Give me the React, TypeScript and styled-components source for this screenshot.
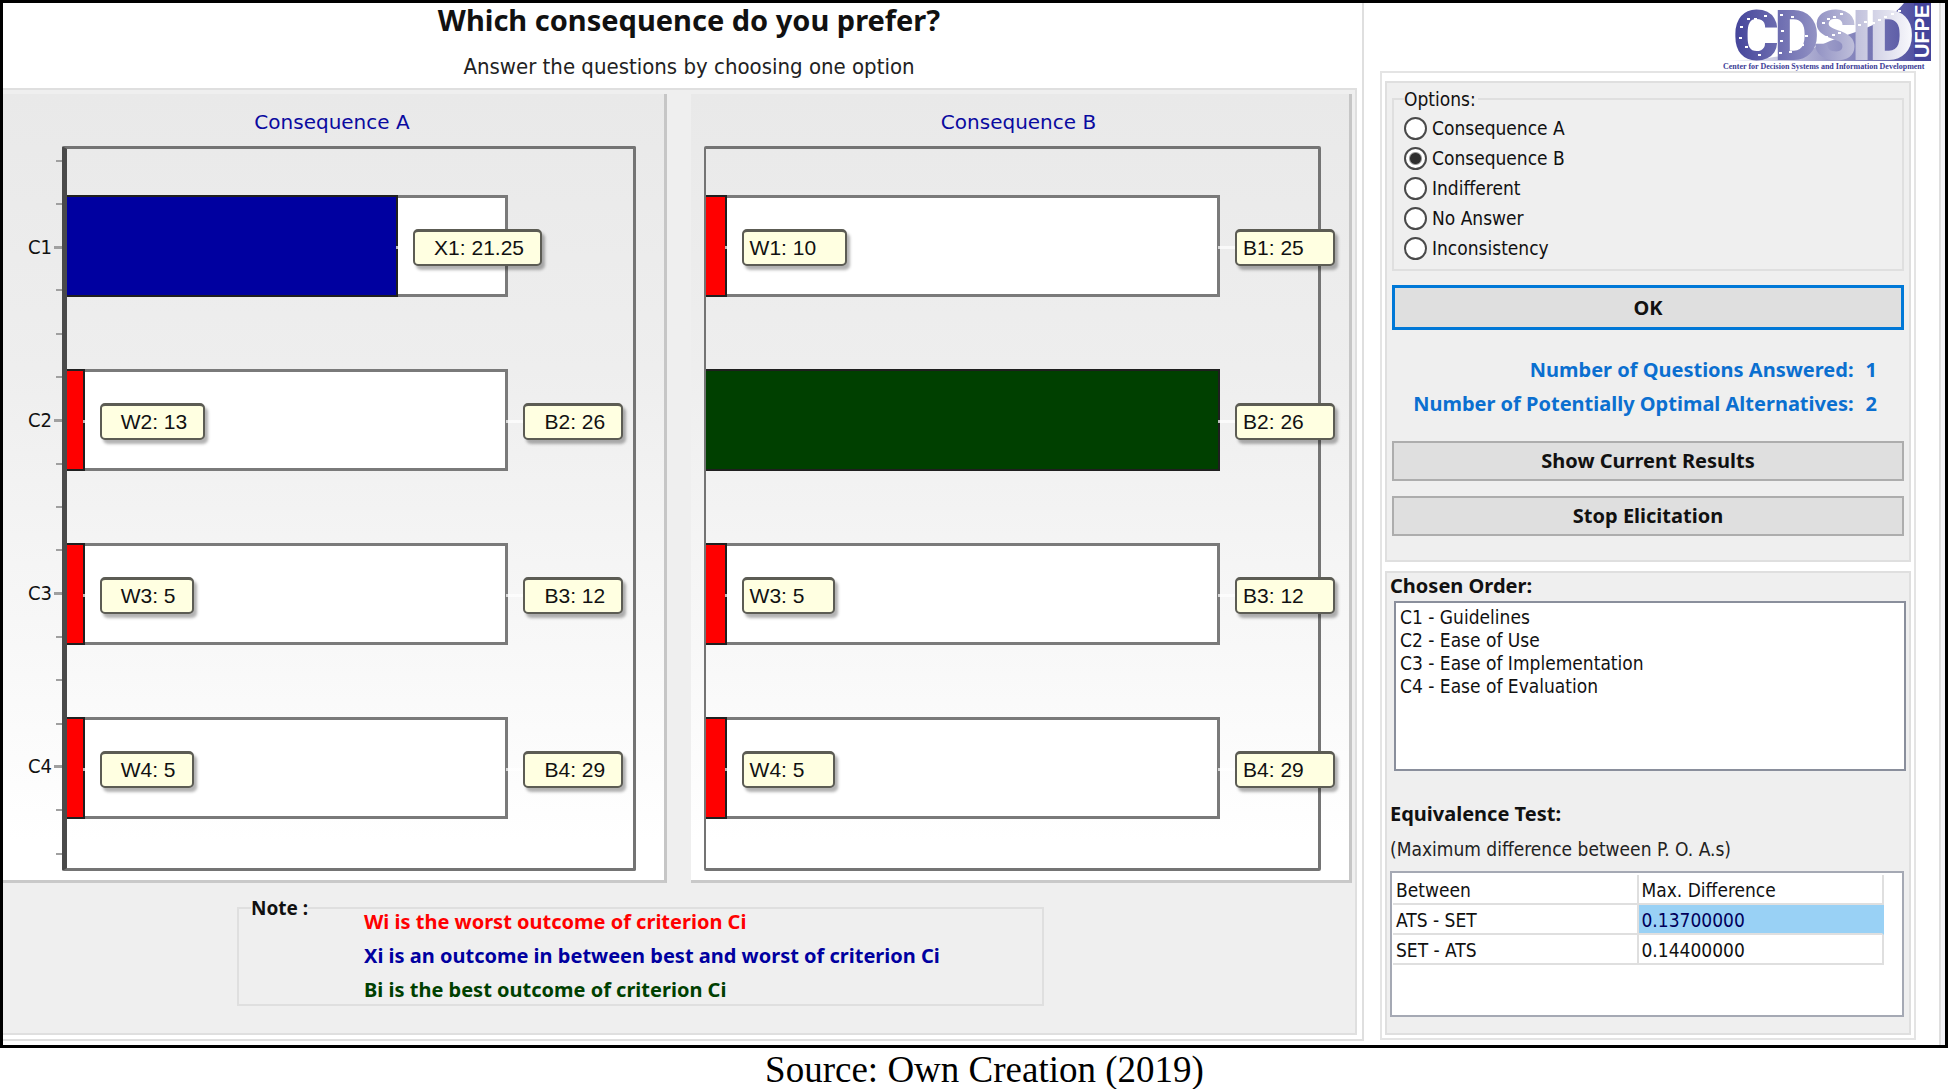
import React, { useState } from "react";
import styled, { createGlobalStyle } from "styled-components";

const ui = `"DejaVu Sans Condensed", "DejaVu Sans", Tahoma, sans-serif`;
const uiBold = `"Noto Sans", Tahoma, sans-serif`;
const line = "#dfdfdf";
const face = "#efefef";

const GlobalStyle = createGlobalStyle`
  * { box-sizing: border-box; }
  body { margin: 0; background: #fff; color: #111; font: 19px/25px ${ui}; }
  h1, h2, p, ul { margin: 0; padding: 0; }
`;

const Window = styled.div`
  display: flex;
  border: 3px solid #000;
`;

const Main = styled.main`
  flex: 1;
  min-width: 0;
  margin-bottom: 4px;
  border-right: 2px solid ${line};
  border-bottom: 2px solid ${line};
  padding: 0 5px 4px 0;
`;

const Header = styled.header`
  padding: 0 0 6px 18px;
  text-align: center;
`;

const Title = styled.h1`
  font: bold 29px/34px ${uiBold};
`;

const Subtitle = styled.p`
  margin-top: 15px;
  font-size: 22px;
  line-height: 30px;
  color: #222;
`;

const Body = styled.section`
  border: 2px solid ${line};
  border-left: 0;
  background: ${face};
  padding: 4px 3px 27px 0;
`;

const Charts = styled.div`
  display: grid;
  grid-template-columns: 664fr 661fr;
  gap: 24px;
`;

const ChartPanel = styled.section`
  display: flex;
  flex-direction: column;
  padding: 0 28px 9px 0;
  border-right: 3px solid #c6c6c6;
  border-bottom: 3px solid #c9c9c9;
  background: linear-gradient(#e9e9e9, #eeeeee 35%, #ffffff 95%);
`;

const ChartTitle = styled.h2`
  padding: 16px 0 11px 25px;
  text-align: center;
  font: 20px/25px "DejaVu Sans", Verdana, sans-serif;
  color: #0a0aa0;
`;

const ChartArea = styled.div`
  display: flex;
`;

const Axis = styled.div<{ $wide: boolean }>`
  flex: none;
  width: ${(p) => (p.$wide ? 59 : 13)}px;
  display: flex;
  flex-direction: column;
  justify-content: space-between;
  padding: 13px 0 16px;
  font-size: 20px;
`;

const Tick = styled.div`
  display: flex;
  align-items: center;
  justify-content: flex-end;
  height: 3px;
  gap: 2px;
`;

const TickMark = styled.span<{ $major: boolean }>`
  width: ${(p) => (p.$major ? 8 : 6)}px;
  height: ${(p) => (p.$major ? 3 : 2)}px;
  background: #a0a0a0;
`;

const Plot = styled.div<{ $axis: boolean }>`
  flex: 1;
  display: flex;
  flex-direction: column;
  gap: 72px;
  padding: 46px 0 49px;
  border: 3px solid #747474;
  border-left: ${(p) => (p.$axis ? "5px solid #4a4a4a" : "2px solid #747474")};
  border-radius: 2px;
`;

const Bar = styled.div`
  position: relative;
  height: 102px;
  background: #fff;
  box-shadow: inset -3px 3px #7a7a7a, inset 0 -3px #7a7a7a;
`;

const Fill = styled.div<{ $color: string }>`
  position: relative;
  height: 102px;
  background: ${(p) => p.$color};
  box-shadow: inset -2px 2px #1f1f1f, inset 0 -2px #1f1f1f;
`;

const Tag = styled.span<{ $inset: boolean }>`
  position: absolute;
  z-index: 1;
  top: 34px;
  left: calc(100% + 15px);
  padding: 0 ${(p) => (p.$inset ? "16px 0 19px" : "29px 0 6px")};
  border: 2px solid #5c5c54;
  border-top-width: 3px;
  border-radius: 5px;
  background: #ffffe1;
  box-shadow: 3px 4px 3px rgba(0, 0, 0, 0.3);
  font: 21px/32px "Liberation Sans", Arial, sans-serif;
  white-space: nowrap;

  &::before {
    content: "";
    position: absolute;
    right: calc(100% + 2px);
    top: 14px;
    width: 17px;
    height: 3px;
    background: rgba(255, 255, 255, 0.7);
  }
`;

const Note = styled.fieldset`
  min-width: 0;
  margin: 12px 308px 0 234px;
  padding: 0 12px;
  border: 2px solid ${line};
`;

const NoteLegend = styled.legend`
  padding: 0;
  font: bold 19px/26px ${uiBold};
`;

const NoteList = styled.ul`
  display: flex;
  flex-direction: column;
  gap: 6px;
  margin-top: -13px;
  padding-left: 113px;
  list-style: none;
`;

const NoteItem = styled.li<{ $color: string }>`
  font: bold 20px/28px ${uiBold};
  color: ${(p) => p.$color};
`;

const Side = styled.aside`
  flex: none;
  width: 575px;
  padding: 0 23px 4px 16px;
`;

const LogoRow = styled.div`
  display: flex;
  justify-content: flex-end;
  height: 68px;
  margin-right: -15px;
`;

const LogoArt = styled.svg`
  width: 211px;
  height: 68px;
  overflow: visible;
`;

const Gutter = styled.div`
  flex: none;
  width: 6px;
  border-left: 2px solid ${line};
  background: #f3f3f7;
`;

const SidePanel = styled.div`
  display: flex;
  flex-direction: column;
  gap: 9px;
  padding: 8px 3px 3px;
  border: 2px solid #e4e4e4;
`;

const ActionGroup = styled.section`
  display: flex;
  flex-direction: column;
  padding: 5px 5px 24px;
  border: 2px solid ${line};
  background: ${face};
`;

const ResultGroup = styled.section`
  padding: 0 3px 16px;
  border: 2px solid ${line};
  background: ${face};
`;

const Options = styled.fieldset`
  min-width: 0;
  margin: 0 0 14px;
  padding: 3px 10px 6px;
  border: 2px solid ${line};
`;

const OptionsLegend = styled.legend`
  padding: 0 2px 0 0;
  line-height: 22px;
`;

const Option = styled.label`
  display: flex;
  align-items: center;
  gap: 5px;
  line-height: 30px;
`;

const Radio = styled.input`
  appearance: none;
  width: 23px;
  height: 23px;
  margin: 0;
  border: 2px solid #4a4a4a;
  border-radius: 50%;
  background: #fff;

  &:checked {
    background: radial-gradient(circle, #2e2e2e 5px, #fff 7px);
  }
`;

const Button = styled.button<{ $primary?: boolean }>`
  padding: 0;
  border: ${(p) => (p.$primary ? "3px solid #0078d7" : "2px solid #adadad")};
  background: #dfdfdf;
  color: #111;
  font: bold 20px/${(p) => (p.$primary ? 39 : 36)}px ${uiBold};
`;

const Stats = styled.div`
  margin: 23px 27px 20px 0;
`;

const Stat = styled.p`
  display: flex;
  justify-content: flex-end;
  gap: 12px;
  font: bold 20px/34px ${uiBold};
  color: #0b6fd0;
`;

const Buttons = styled.div`
  display: flex;
  flex-direction: column;
  gap: 15px;
`;

const GroupTitle = styled.h2`
  font: bold 20px/26px ${uiBold};
`;

const OrderList = styled.ul`
  min-height: 170px;
  margin: 2px 0 30px 4px;
  padding: 3px 4px;
  border: 2px solid #8a8f9c;
  background: #fff;
  list-style: none;
  line-height: 23px;
`;

const Hint = styled.p`
  margin: 9px 0;
  line-height: 26px;
  color: #222;
`;

const Grid = styled.div`
  min-height: 146px;
  margin-right: 2px;
  padding: 2px 18px 0 1px;
  border: 2px solid #a5a9b4;
  background: #fff;
`;

const Table = styled.table`
  width: 100%;
  table-layout: fixed;
  border-collapse: separate;
  border-spacing: 0;
`;

const cell = `
  padding: 3px 0 0 3px;
  border: solid ${line};
  border-width: 0 2px 2px 0;
  font-weight: normal;
  text-align: left;
`;

const HeadCell = styled.th`
  ${cell}
`;

const Cell = styled.td<{ $selected?: boolean }>`
  ${cell}
  ${(p) => p.$selected && "background: #99d1f5; color: #00005a; border-right-color: #99d1f5;"}
`;

const Caption = styled.p`
  padding: 0 0 0 21px;
  text-align: center;
  font: 37px/43px "Liberation Serif", "Times New Roman", serif;
  color: #000;
`;

const blue = "#0000a0";
const red = "#ff0000";
const green = "#004000";

type BarData = { fill: number; color: string; inner?: string; outer?: string };

const chartA: BarData[] = [
  { fill: 75, color: blue, inner: "X1: 21.25" },
  { fill: 4, color: red, inner: "W2: 13", outer: "B2: 26" },
  { fill: 4, color: red, inner: "W3: 5", outer: "B3: 12" },
  { fill: 4, color: red, inner: "W4: 5", outer: "B4: 29" },
];

const chartB: BarData[] = [
  { fill: 4, color: red, inner: "W1: 10", outer: "B1: 25" },
  { fill: 100, color: green, outer: "B2: 26" },
  { fill: 4, color: red, inner: "W3: 5", outer: "B3: 12" },
  { fill: 4, color: red, inner: "W4: 5", outer: "B4: 29" },
];

function Chart({ title, bars, scale, axis = false }: { title: string; bars: BarData[]; scale: number; axis?: boolean }) {
  return (
    <ChartPanel>
      <ChartTitle>{title}</ChartTitle>
      <ChartArea>
        <Axis $wide={axis}>
          {axis &&
            Array.from({ length: 17 }, (_, i) => {
              const major = i % 4 === 2;
              return (
                <Tick key={i}>
                  {major && <span>C{(i + 2) / 4}</span>}
                  <TickMark $major={major} />
                </Tick>
              );
            })}
        </Axis>
        <Plot $axis={axis}>
          {bars.map((bar, i) => (
            <Bar key={i} style={{ width: `${scale}%` }}>
              <Fill $color={bar.color} style={{ width: `${bar.fill}%` }}>
                {bar.inner && <Tag $inset={axis}>{bar.inner}</Tag>}
              </Fill>
              {bar.outer && <Tag $inset={axis}>{bar.outer}</Tag>}
            </Bar>
          ))}
        </Plot>
      </ChartArea>
    </ChartPanel>
  );
}

const dots = [
  [21, 24], [20, 35], [26, 44], [39, 52], [45, 13], [35, 16], [28, 16], [61, 12], [62, 28], [61, 38], [60, 50],
  [72, 14], [80, 22], [86, 33], [82, 42], [70, 49], [103, 20], [108, 16], [114, 14], [121, 11], [106, 34],
  [113, 32], [119, 30], [126, 27], [133, 24], [139, 22], [145, 19], [153, 20], [159, 17], [165, 14], [172, 11], [179, 8],
];

function Logo() {
  return (
    <LogoArt viewBox="0 0 211 68" role="img" aria-label="CDSID UFPE">
      <defs>
        <linearGradient id="letters" gradientUnits="userSpaceOnUse" x1="14" y1="0" x2="190" y2="0">
          <stop offset="0" stopColor="#44449a" />
          <stop offset="0.4" stopColor="#8585bd" />
          <stop offset="0.7" stopColor="#c2c2dc" />
          <stop offset="1" stopColor="#f6f6fb" />
        </linearGradient>
        <linearGradient id="wedge" x1="0" y1="0" x2="1" y2="0">
          <stop offset="0" stopColor="#ffffff" />
          <stop offset="0.5" stopColor="#9c9cc8" />
          <stop offset="1" stopColor="#44449a" />
        </linearGradient>
      </defs>
      <path d="M0 58 C60 56 85 50 110 38 C145 26 170 18 184 0 H211 V58 Z" fill="url(#wedge)" />
      <text x="13 54 93 131 149" y="57" fontFamily="Roboto, sans-serif" fontWeight="900" fontSize="70" fill="url(#letters)">
        CDSID
      </text>
      {dots.map(([x, y]) => (
        <rect key={`${x}-${y}`} x={x - 1} y={y - 1} width="3" height="2" fill="#fff" />
      ))}
      <rect x="194" width="17" height="58" fill="#44449a" />
      <text x="-55" y="209" transform="rotate(-90)" fontFamily="Liberation Sans, sans-serif" fontWeight="bold" fontSize="20" fill="#fff">UFPE</text>
      <text x="3" y="66" fontFamily="Liberation Serif, serif" fontWeight="bold" fontSize="8" fill="#3c3c96">Center for Decision Systems and Information Development</text>
    </LogoArt>
  );
}

const options = ["Consequence A", "Consequence B", "Indifferent", "No Answer", "Inconsistency"];
const order = ["C1 - Guidelines", "C2 - Ease of Use", "C3 - Ease of Implementation", "C4 - Ease of Evaluation"];

export default function App() {
  const [choice, setChoice] = useState("Consequence B");
  return (
    <>
      <GlobalStyle />
      <Window>
        <Main>
          <Header>
            <Title>Which consequence do you prefer?</Title>
            <Subtitle>Answer the questions by choosing one option</Subtitle>
          </Header>
          <Body>
            <Charts>
              <Chart title="Consequence A" bars={chartA} scale={78} axis />
              <Chart title="Consequence B" bars={chartB} scale={84} />
            </Charts>
            <Note>
              <NoteLegend>Note :</NoteLegend>
              <NoteList>
                <NoteItem $color={red}>Wi is the worst outcome of criterion Ci</NoteItem>
                <NoteItem $color={blue}>Xi is an outcome in between best and worst of criterion Ci</NoteItem>
                <NoteItem $color={green}>Bi is the best outcome of criterion Ci</NoteItem>
              </NoteList>
            </Note>
          </Body>
        </Main>
        <Side>
          <LogoRow>
            <Logo />
          </LogoRow>
          <SidePanel>
            <ActionGroup>
              <Options>
                <OptionsLegend>Options:</OptionsLegend>
                {options.map((name) => (
                  <Option key={name}>
                    <Radio type="radio" name="option" checked={choice === name} onChange={() => setChoice(name)} />
                    {name}
                  </Option>
                ))}
              </Options>
              <Button type="button" $primary>OK</Button>
              <Stats>
                <Stat><span>Number of Questions Answered:</span><span>1</span></Stat>
                <Stat><span>Number of Potentially Optimal Alternatives:</span><span>2</span></Stat>
              </Stats>
              <Buttons>
                <Button type="button">Show Current Results</Button>
                <Button type="button">Stop Elicitation</Button>
              </Buttons>
            </ActionGroup>
            <ResultGroup>
              <GroupTitle>Chosen Order:</GroupTitle>
              <OrderList>
                {order.map((item) => <li key={item}>{item}</li>)}
              </OrderList>
              <GroupTitle>Equivalence Test:</GroupTitle>
              <Hint>(Maximum difference between P. O. A.s)</Hint>
              <Grid>
                <Table>
                  <thead>
                    <tr><HeadCell>Between</HeadCell><HeadCell>Max. Difference</HeadCell></tr>
                  </thead>
                  <tbody>
                    <tr><Cell>ATS - SET</Cell><Cell $selected>0.13700000</Cell></tr>
                    <tr><Cell>SET - ATS</Cell><Cell>0.14400000</Cell></tr>
                  </tbody>
                </Table>
              </Grid>
            </ResultGroup>
          </SidePanel>
        </Side>
        <Gutter />
      </Window>
      <Caption>Source: Own Creation (2019)</Caption>
    </>
  );
}
